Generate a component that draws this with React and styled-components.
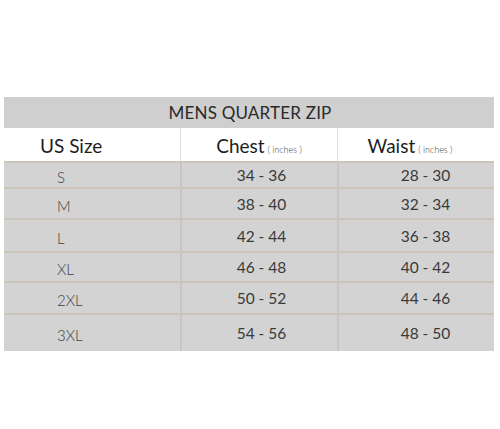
import styled, { createGlobalStyle } from "styled-components";

const sizes = [
    { size: "S", chest: "34 - 36", waist: "28 - 30", h: 26 },
    { size: "M", chest: "38 - 40", waist: "32 - 34", h: 31 },
    { size: "L", chest: "42 - 44", waist: "36 - 38", h: 33 },
    { size: "XL", chest: "46 - 48", waist: "40 - 42", h: 30 },
    { size: "2XL", chest: "50 - 52", waist: "44 - 46", h: 32 },
    { size: "3XL", chest: "54 - 56", waist: "48 - 50", h: 38 },
];

function App() {
    return (
        <Page>
            <Global />
            <Table>
                <Title>MENS QUARTER ZIP</Title>
                <HeadRow>
                    <HeadCell first>US Size</HeadCell>
                    <HeadCell center>
                        Chest<Unit>( inches )</Unit>
                    </HeadCell>
                    <HeadCell center pull={12}>
                        Waist<Unit>( inches )</Unit>
                    </HeadCell>
                </HeadRow>
                {sizes.map((row) => (
                    <Row key={row.size} h={row.h}>
                        <SizeCell>{row.size}</SizeCell>
                        <Cell shift={4}>{row.chest}</Cell>
                        <Cell shift={18}>{row.waist}</Cell>
                    </Row>
                ))}
            </Table>
        </Page>
    );
}

const Global = createGlobalStyle`
    body {
        margin: 0;
        background: #ffffff;
        font-family: Lato, "Liberation Sans", sans-serif;
    }
`;

const Page = styled.div`
    width: 500px;
    height: 429px;
    padding: 97px 6px 0 4px;
    box-sizing: border-box;
`;

const Table = styled.div`
    width: 490px;
    background: #d3d3d3;
`;

const Title = styled.div`
    height: 31px;
    display: flex;
    align-items: center;
    justify-content: center;
    padding-left: 2px;
    background: #cfcfcf;
    font-size: 17px;
    font-weight: 400;
    color: #2a2a2a;
    letter-spacing: 0.2px;
`;

const Grid = styled.div`
    display: grid;
    grid-template-columns: 176px 157px 157px;
`;

const HeadRow = styled(Grid)`
    height: 33px;
    background: #ffffff;
`;

const HeadCell = styled.div`
    display: flex;
    align-items: baseline;
    justify-content: ${({ center }) => (center ? "center" : "flex-start")};
    padding-top: 6px;
    padding-left: ${({ first }) => (first ? "36px" : "0")};
    padding-right: ${({ pull }) => pull || 0}px;
    border-left: ${({ first }) => (first ? "none" : "1px solid #e2dcd2")};
    font-size: 19px;
    font-weight: 400;
    color: #1e1e1e;
`;

const Unit = styled.span`
    margin-left: 3px;
    font-size: 9px;
    font-weight: 300;
    color: #444;
`;

const Row = styled(Grid)`
    height: ${({ h }) => h}px;
    border-top: 2px solid #cbc4ba;
    box-sizing: border-box;
`;

const SizeCell = styled.div`
    display: flex;
    align-items: center;
    padding: 4px 0 0 53px;
    font-size: 15px;
    font-weight: 300;
    color: #3f3f3f;
`;

const Cell = styled.div`
    display: flex;
    align-items: center;
    justify-content: center;
    padding-left: ${({ shift }) => shift}px;
    border-left: 2px solid #cbc4ba;
    font-size: 15.5px;
    font-weight: 400;
    color: #3a3a3a;
`;

export default App;
